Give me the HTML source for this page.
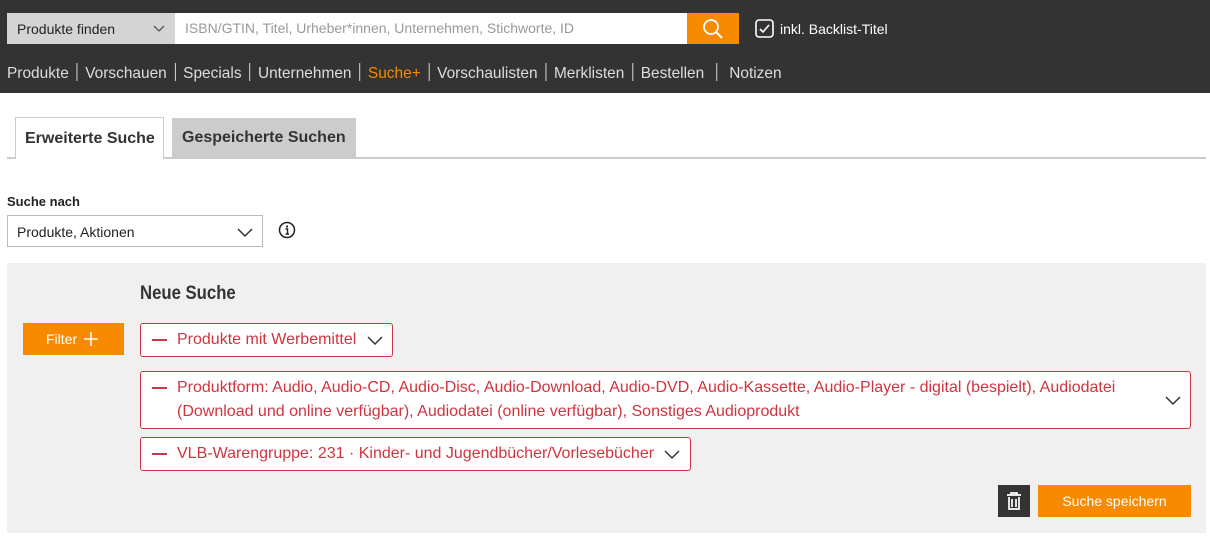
<!DOCTYPE html>
<html><head><meta charset="utf-8"><style>
*{box-sizing:border-box;margin:0;padding:0}
body{width:1210px;height:541px;background:#fff;font-family:"Liberation Sans",Arial,sans-serif;position:relative;overflow:hidden}
.hdr{position:absolute;left:0;top:0;width:1210px;height:93px;background:#333}
.abs{position:absolute}
.sel{left:7px;top:13px;width:168px;height:31px;background:#d4d4d4;font-size:14px;color:#222;padding:8px 10px}
.inp{left:175px;top:13px;width:512px;height:31px;background:#fff;font-size:14px;color:#999;padding:7px 10px;transform-origin:left}
.sbtn{left:687px;top:13px;width:52px;height:31px;background:#f88a00}
.nav{left:7px;top:63px;font-size:16px;color:#ddd;white-space:nowrap;transform:scaleX(.965);transform-origin:left top}
.nav i{font-style:normal;display:inline-block;width:1px;height:18px;background:#ddd;margin:0 8px;vertical-align:-3px}
.tab1{left:15px;top:117px;width:149px;height:42px;border:1px solid #ccc;border-bottom:none;background:#fff;font-weight:bold;font-size:16px;color:#333;padding:12px 0 0 9px}
.tab2{left:172px;top:118px;width:184px;height:39px;background:#ccc;font-weight:bold;font-size:16px;color:#333;padding:11px 0 0 10px}
.line{left:7px;top:157px;width:1199px;height:2px;background:#ccc}
.panel{left:7px;top:263px;width:1199px;height:270px;background:#f0f0f0}
.chip{position:absolute;left:140px;background:#fff;border:1px solid #d0343f;border-radius:3px;color:#d0343f;font-size:16px;padding:0 0 0 36px}
.chip:before{content:"";position:absolute;left:11px;width:15px;height:2px;background:#d0343f;top:15px}
</style></head><body>
<div class="hdr">
<div class="abs sel">Produkte finden<svg class="abs" style="left:146px;top:12px" width="12" height="8"><path d="M1 1l5 5 5-5" fill="none" stroke="#555" stroke-width="1.3"/></svg></div>
<div class="abs inp">ISBN/GTIN, Titel, Urheber*innen, Unternehmen, Stichworte, ID</div>
<div class="abs sbtn"><svg width="52" height="31"><circle cx="24" cy="14" r="7" fill="none" stroke="#fff" stroke-width="1.8"/><path d="M29 19l6 6" stroke="#fff" stroke-width="2"/></svg></div>
<svg class="abs" style="left:755px;top:19px" width="20" height="20"><rect x="1" y="1" width="17" height="17" rx="3" fill="none" stroke="#fff" stroke-width="1.6"/><path d="M5 10l3 3 6-7" fill="none" stroke="#fff" stroke-width="1.6"/></svg>
<div class="abs" style="left:780px;top:21px;font-size:14px;color:#fff">inkl. Backlist-Titel</div>
<div class="abs nav">Produkte<i></i>Vorschauen<i></i>Specials<i></i>Unternehmen<i></i><span style="color:#f88a00">Suche+</span><i></i>Vorschaulisten<i></i>Merklisten<i></i>Bestellen <i></i> Notizen</div>
</div>
<div class="abs line"></div>
<div class="abs tab1">Erweiterte Suche</div>
<div class="abs tab2">Gespeicherte Suchen</div>
<div class="abs" style="left:7px;top:194px;font-size:13px;font-weight:bold;color:#222">Suche nach</div>
<div class="abs" style="left:7px;top:215px;width:256px;height:32px;border:1px solid #bbb;font-size:14px;color:#222;padding:8px 9px">Produkte, Aktionen<svg class="abs" style="left:229px;top:12px" width="16" height="10"><path d="M1 1l7 7 7-7" fill="none" stroke="#333" stroke-width="1.5"/></svg></div>
<svg class="abs" style="left:278px;top:221px" width="18" height="18"><circle cx="9" cy="9" r="7.5" fill="none" stroke="#222" stroke-width="1.5"/><circle cx="9" cy="5.5" r="1.1" fill="#222"/><path d="M7.5 8h2v5M7.5 13h3.5" fill="none" stroke="#222" stroke-width="1.4"/></svg>
<div class="abs panel"></div>
<div class="abs" style="left:140px;top:283px;font-size:19px;font-weight:bold;color:#333;transform:scaleX(.88);transform-origin:left">Neue Suche</div>
<div class="abs" style="left:23px;top:323px;width:101px;height:32px;background:#f88a00;color:#fff;font-size:14px;padding:8px 0 0 23px">Filter<svg class="abs" style="left:61px;top:9px" width="14" height="14"><path d="M7 0v14M0 7h14" stroke="#fff" stroke-width="1.6"/></svg></div>
<div class="chip" style="top:323px;width:253px;height:34px;line-height:32px">Produkte mit Werbemittel<svg class="abs" style="left:226px;top:12px" width="16" height="10"><path d="M1 1l7 7 7-7" fill="none" stroke="#333" stroke-width="1.5"/></svg></div>
<div class="chip" style="top:371px;width:1051px;height:58px;line-height:24px;padding-top:4px;padding-right:40px">Produktform: Audio, Audio-CD, Audio-Disc, Audio-Download, Audio-DVD, Audio-Kassette, Audio-Player - digital (bespielt), Audiodatei (Download und online verfügbar), Audiodatei (online verfügbar), Sonstiges Audioprodukt<svg class="abs" style="left:1024px;top:24px" width="16" height="10"><path d="M1 1l7 7 7-7" fill="none" stroke="#333" stroke-width="1.5"/></svg></div>
<div class="chip" style="top:437px;width:551px;height:34px;line-height:32px">VLB-Warengruppe: 231 · Kinder- und Jugendbücher/Vorlesebücher<svg class="abs" style="left:523px;top:12px" width="16" height="10"><path d="M1 1l7 7 7-7" fill="none" stroke="#333" stroke-width="1.5"/></svg></div>
<div class="abs" style="left:998px;top:485px;width:32px;height:32px;background:#333"><svg width="32" height="32"><path d="M9 10h14M13 10V8h6v2M11 12v12h10V12M14 14v8M18 14v8" fill="none" stroke="#fff" stroke-width="1.7"/></svg></div>
<div class="abs" style="left:1038px;top:485px;width:153px;height:32px;background:#f88a00;color:#fff;font-size:14px;text-align:center;line-height:32px">Suche speichern</div>
</body></html>
